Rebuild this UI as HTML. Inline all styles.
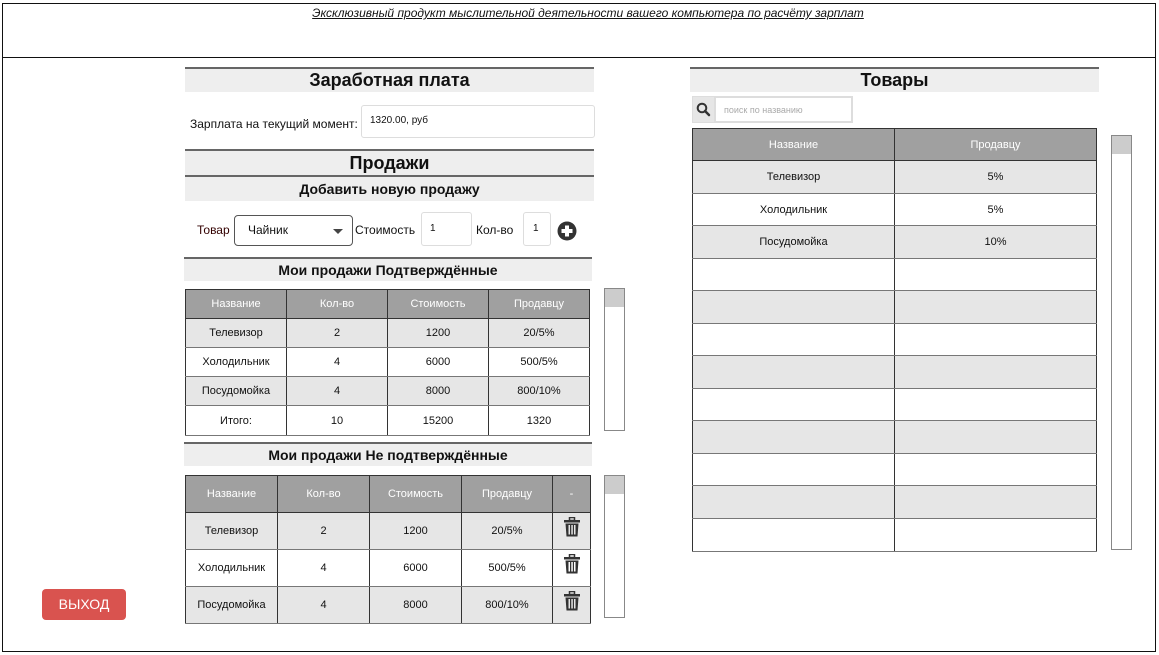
<!DOCTYPE html>
<html><head><meta charset="utf-8"><style>
*{box-sizing:border-box;margin:0;padding:0}
body{width:1159px;height:655px;background:#fff;font-family:"Liberation Sans","DejaVu Sans",sans-serif;color:#111;position:relative;overflow:hidden}
.a{position:absolute}
.bar{position:absolute;background:#eee;border-top:2px solid #666;text-align:center;font-weight:bold}
table{position:absolute;border-collapse:collapse;font-size:11px;table-layout:fixed}
td,th{border:1px solid #333;text-align:center;font-weight:normal}
th{background:#a0a0a0;color:#fff;border-color:#333}
tr.g td{background:#e6e6e6}
tr td{border-color:#777;border-left-color:#333;border-right-color:#333}
.sb{position:absolute;border:1px solid #888;background:#fff}
.sb div{background:#ccc;height:18px}
.inp{position:absolute;border:1px solid #ddd;border-radius:3px;background:#fff;font-size:10px;padding-left:8px}
</style></head><body>
<div class="a" style="left:2px;top:3px;width:1154px;height:649px;border:1px solid #111"></div>
<div class="a" style="left:2px;top:57px;width:1154px;border-top:1px solid #111"></div>
<div class="a" style="left:0;top:6px;width:1176px;text-align:center;font-size:12px;font-style:italic;text-decoration:underline;font-family:'Liberation Sans Narrow','Liberation Sans',sans-serif">Эксклюзивный продукт мыслительной деятельности вашего компьютера по расчёту зарплат</div>

<div class="bar" style="left:185px;top:67px;width:409px;height:25px;font-size:18px;line-height:23px">Заработная плата</div>
<div class="a" style="left:190px;top:117px;font-size:12px">Зарплата на текущий момент:</div>
<div class="inp" style="left:361px;top:105px;width:234px;height:33px;line-height:30px">1320.00, руб</div>
<div class="bar" style="left:185px;top:149px;width:409px;height:26px;font-size:18px;line-height:24px">Продажи</div>
<div class="bar" style="left:185px;top:175px;width:409px;height:26px;font-size:14px;line-height:24px">Добавить новую продажу</div>

<div class="a" style="left:197px;top:223px;font-size:12px;color:#300">Товар</div>
<div class="a" style="left:234px;top:215px;width:119px;height:31px;border:1px solid #555;border-radius:4px;font-size:12px;line-height:29px;padding-left:13px">Чайник<span class="a" style="right:9px;top:13px;border-left:5px solid transparent;border-right:5px solid transparent;border-top:5px solid #444"></span></div>
<div class="a" style="left:355px;top:223px;font-size:12px">Стоимость</div>
<div class="inp" style="left:421px;top:212px;width:51px;height:34px;line-height:32px">1</div>
<div class="a" style="left:476px;top:223px;font-size:12px">Кол-во</div>
<div class="inp" style="left:523px;top:212px;width:28px;height:34px;line-height:32px;padding-left:9px">1</div>
<svg class="a" style="left:557px;top:221px" width="20" height="20" viewBox="0 0 20 20"><circle cx="10" cy="10" r="9.5" fill="#333"/><rect x="8" y="4.5" width="4" height="11" fill="#fff"/><rect x="4.5" y="8" width="11" height="4" fill="#fff"/></svg>

<div class="bar" style="left:184px;top:257px;width:408px;height:24px;font-size:14px;line-height:22px">Мои продажи Подтверждённые</div>
<table style="left:185px;top:289px;width:405px">
<tr style="height:29px"><th>Название</th><th>Кол-во</th><th>Стоимость</th><th>Продавцу</th></tr>
<tr class="g" style="height:29px"><td>Телевизор</td><td>2</td><td>1200</td><td>20/5%</td></tr>
<tr style="height:29px"><td>Холодильник</td><td>4</td><td>6000</td><td>500/5%</td></tr>
<tr class="g" style="height:29px"><td>Посудомойка</td><td>4</td><td>8000</td><td>800/10%</td></tr>
<tr style="height:30px"><td>Итого:</td><td>10</td><td>15200</td><td>1320</td></tr>
</table>
<div class="sb" style="left:604px;top:288px;width:21px;height:143px"><div></div></div>

<div class="bar" style="left:184px;top:442px;width:408px;height:24px;font-size:14px;line-height:22px">Мои продажи Не подтверждённые</div>
<table style="left:185px;top:475px;width:405px">
<colgroup><col style="width:92px"><col style="width:92px"><col style="width:92px"><col style="width:91px"><col style="width:38px"></colgroup>
<tr style="height:37px"><th>Название</th><th>Кол-во</th><th>Стоимость</th><th>Продавцу</th><th>-</th></tr>
<tr class="g" style="height:37px"><td>Телевизор</td><td>2</td><td>1200</td><td>20/5%</td><td><svg width="16" height="20" viewBox="0 0 16 20" style="margin-top:-6px"><rect x="5.5" y="0.5" width="5" height="3" fill="none" stroke="#333" stroke-width="1.5"/><rect x="0" y="3" width="16" height="2.5" fill="#333"/><path d="M1.5 6.5h13l-1 13h-11z" fill="#333"/><rect x="4.5" y="8" width="1.5" height="9.5" fill="#e6e6e6"/><rect x="7.3" y="8" width="1.5" height="9.5" fill="#e6e6e6"/><rect x="10" y="8" width="1.5" height="9.5" fill="#e6e6e6"/></svg></td></tr>
<tr style="height:37px"><td>Холодильник</td><td>4</td><td>6000</td><td>500/5%</td><td><svg width="16" height="20" viewBox="0 0 16 20" style="margin-top:-6px"><rect x="5.5" y="0.5" width="5" height="3" fill="none" stroke="#333" stroke-width="1.5"/><rect x="0" y="3" width="16" height="2.5" fill="#333"/><path d="M1.5 6.5h13l-1 13h-11z" fill="#333"/><rect x="4.5" y="8" width="1.5" height="9.5" fill="#fff"/><rect x="7.3" y="8" width="1.5" height="9.5" fill="#fff"/><rect x="10" y="8" width="1.5" height="9.5" fill="#fff"/></svg></td></tr>
<tr class="g" style="height:37px"><td>Посудомойка</td><td>4</td><td>8000</td><td>800/10%</td><td><svg width="16" height="20" viewBox="0 0 16 20" style="margin-top:-6px"><rect x="5.5" y="0.5" width="5" height="3" fill="none" stroke="#333" stroke-width="1.5"/><rect x="0" y="3" width="16" height="2.5" fill="#333"/><path d="M1.5 6.5h13l-1 13h-11z" fill="#333"/><rect x="4.5" y="8" width="1.5" height="9.5" fill="#e6e6e6"/><rect x="7.3" y="8" width="1.5" height="9.5" fill="#e6e6e6"/><rect x="10" y="8" width="1.5" height="9.5" fill="#e6e6e6"/></svg></td></tr>
</table>
<div class="sb" style="left:604px;top:475px;width:21px;height:143px"><div></div></div>

<div class="a" style="left:42px;top:589px;width:84px;height:31px;background:#d9534f;border-radius:4px;color:#fff;font-size:14px;text-align:center;line-height:31px">ВЫХОД</div>

<div class="bar" style="left:690px;top:67px;width:409px;height:25px;font-size:18px;line-height:23px">Товары</div>
<div class="a" style="left:692px;top:96px;width:23px;height:27px;background:#e6e6e6;border:1px solid #ddd"></div>
<svg class="a" style="left:696px;top:102px" width="15" height="15" viewBox="0 0 15 15"><circle cx="6" cy="6" r="4.3" fill="none" stroke="#333" stroke-width="2"/><path d="M9 9l4 4" stroke="#333" stroke-width="2.5" stroke-linecap="round"/></svg>
<div class="inp" style="left:714px;top:96px;width:139px;height:27px;line-height:25px;color:#aaa;border-radius:0;border-width:2px;font-size:9px">поиск по названию</div>
<table style="left:692px;top:128px;width:405px">
<tr style="height:32px"><th>Название</th><th>Продавцу</th></tr>
<tr class="g" style="height:33px"><td>Телевизор</td><td>5%</td></tr>
<tr style="height:32px"><td>Холодильник</td><td>5%</td></tr>
<tr class="g" style="height:33px"><td>Посудомойка</td><td>10%</td></tr>
<tr style="height:32px"><td></td><td></td></tr>
<tr class="g" style="height:33px"><td></td><td></td></tr>
<tr style="height:32px"><td></td><td></td></tr>
<tr class="g" style="height:33px"><td></td><td></td></tr>
<tr style="height:32px"><td></td><td></td></tr>
<tr class="g" style="height:33px"><td></td><td></td></tr>
<tr style="height:32px"><td></td><td></td></tr>
<tr class="g" style="height:33px"><td></td><td></td></tr>
<tr style="height:33px"><td></td><td></td></tr>
</table>
<div class="sb" style="left:1111px;top:135px;width:21px;height:415px"><div></div></div>
</body></html>
